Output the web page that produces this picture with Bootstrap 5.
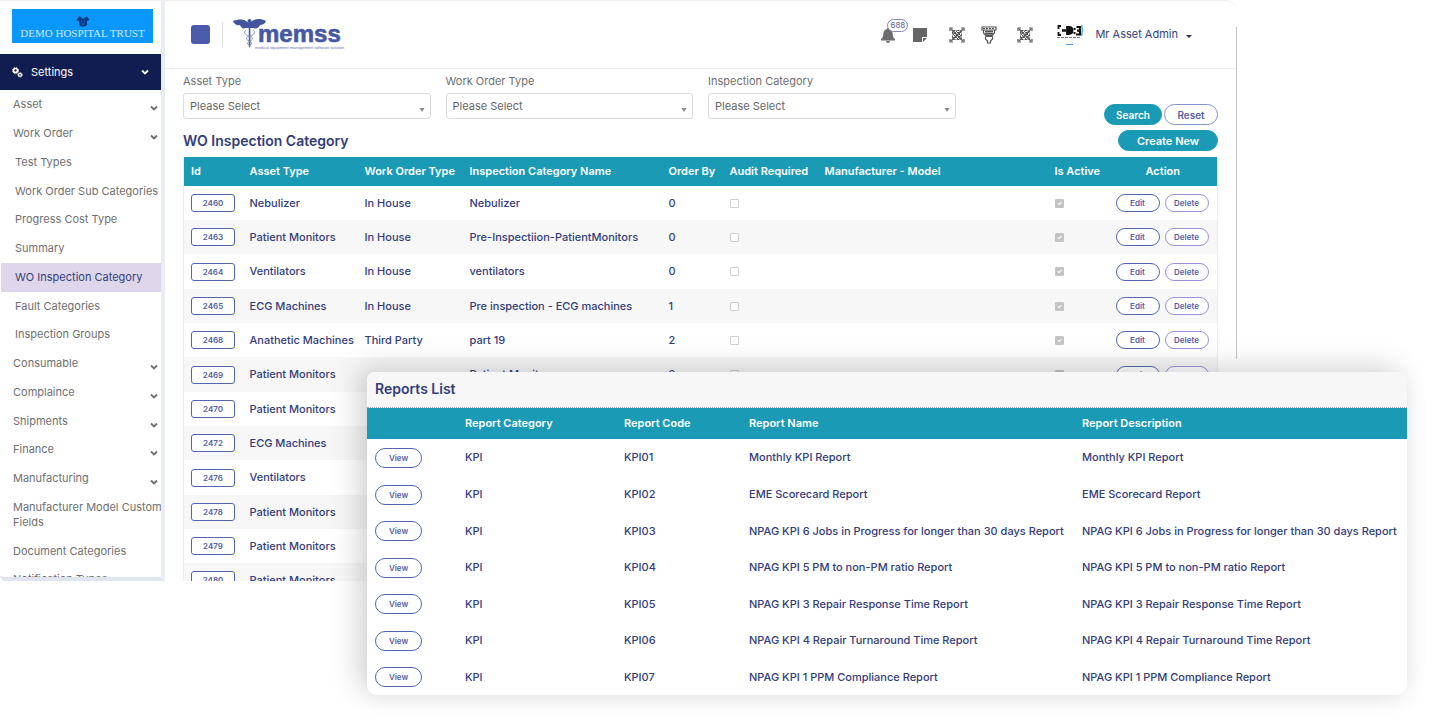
<!DOCTYPE html>
<html lang="en">
<head>
<meta charset="utf-8">
<meta name="viewport" content="width=device-width, initial-scale=1">
<title>WO Inspection Category</title>
<link href="https://cdn.jsdelivr.net/npm/bootstrap@5.3.0/dist/css/bootstrap.min.css" rel="stylesheet">
<style>
:root{--teal:#1a9ab5;--navy:#333d7a;--indigo:#4a5aa8;--ash:#6f6f6f}
body{font-family:Inter,"Open Sans",sans-serif;font-size:11px;line-height:15px;color:var(--navy);background:#fff;min-height:100vh;overflow:hidden}
.stage{min-height:100vh}
.app-window{position:relative;height:80vh;margin-right:200px;border-top:1px solid #f0f0f0;border-top-right-radius:12px;overflow:hidden}
.app-window::after{content:"";position:absolute;top:26px;bottom:222px;right:0;width:1px;background:#c4c4c8}
.side{width:165px;border-right:4px solid #eaedf6;border-bottom:4px solid #e0e4ee;border-bottom-left-radius:6px;overflow:hidden}
.trust{height:34px;margin:8px 8px 11px 12px;background:#0a97fb;color:#cdeaff;font:11px/12px "Liberation Serif",serif;padding-top:7px}
.set-head{height:36px;background:#111d50;color:#fff;padding:0 12px;border:0;font-size:11px}
.menu a{display:flex;justify-content:space-between;align-items:center;min-height:29px;padding:0 3px 0 13px;color:var(--ash);text-decoration:none;flex-shrink:0;white-space:nowrap}
.menu a:nth-child(4n){min-height:28px}
.menu a.leaf{padding-left:15px}
.menu a.current{background:#ded7ec;color:var(--navy);margin-left:1px;padding-left:14px}
.menu a.tall{min-height:44px}
.menu svg{margin-top:7px}
.topbar{height:68px;border-bottom:1px solid #eee;padding:0 45px 0 26px}
.toggle{width:19px;height:19px;border:0;border-radius:3px;background:#4b5ba9;padding:0}
.rule{width:1px;height:25px;background:#dcdce4;margin:0 10px 0 12px}
.plain{border:0;background:none;padding:0;color:inherit;display:block}
.spaced{margin-left:21px}
.count{top:-8px;left:7px;min-width:21px;height:13px;border:1px solid #8088b8;border-radius:7px;background:#fff;color:#555f98;font-size:8px;line-height:11px;text-align:center}
.main-pane{padding:5px 19px 0 18px}
.filters{--bs-gutter-x:15px}
.filters label{display:block;color:var(--ash);margin-bottom:4px}
.picker{height:26px;font-size:11px;line-height:15px;color:#666;padding:0 20px 0 6px;border:1px solid #d9dbdf;border-radius:3px;background-image:url("data:image/svg+xml,%3Csvg xmlns='http://www.w3.org/2000/svg' viewBox='0 0 6 8'%3E%3Cpath d='M.5 3h5L3 7z' fill='%23888'/%3E%3C/svg%3E");background-size:6px 8px;background-position:right 5px bottom 5px}
.form-actions{gap:2px;margin-bottom:-6px}
.pill{border-radius:12px;font-size:10px;line-height:12px;font-weight:600;height:21px;padding:0;border:1px solid var(--teal)}
.pill-fill,.pill-fill:hover{background:var(--teal);color:#fff}
.pill-line{border-color:#7f93cd;color:#5860a8}
.w-search{width:58px}.w-reset{width:54px}.w-create{width:100px;font-size:11px}
.title-row{margin:11px 0 6px}
.heading{font-size:14px;line-height:20px;font-weight:600;margin:0}
.grid{table-layout:fixed;width:100%;margin:0;color:var(--navy);font-weight:500;white-space:nowrap}
.grid th{background:var(--teal);color:#fff;font-weight:600;padding:0 7px}
.grid td{padding:0 7px}
.insp{border:1px solid #ececec;border-top:0}
.insp thead tr{height:29px}
.insp tbody tr{height:34px}
.insp tbody tr:nth-child(3n){height:35px}
.insp tbody tr:nth-child(even){background:#f7f7f7}
.btn-mini{font-size:8px;line-height:10px;font-weight:600;height:18px;padding:0;color:#5560a5;border:1px solid #5266ae;background:#fff;border-radius:9px;width:44px}
.btn-id{border-radius:3px;display:block}
.btn-del{border-color:#9a90d8;margin-left:5px}
.tick{display:block;width:9px;height:9px;margin:0;border:1px solid #cfcfcf;border-radius:2px;opacity:1!important}
.tick[type=checkbox]{border-radius:1px}
.tick:checked{background-color:#c4c4c4;border-color:#c4c4c4}
.report-card{position:absolute;left:367px;right:30px;top:372px;border-radius:8px 8px 10px 10px;background:#fff;overflow:hidden;box-shadow:-9px -5px 28px rgba(0,0,0,.17),4px 6px 22px rgba(0,0,0,.04)}
.report-title{height:36px;background:#f7f7f7;border-bottom:1px dotted #aab;padding:7px 8px}
.reports th,.reports td{padding:0 7px}
.reports th:first-child,.reports td:first-child{padding-left:8px}
.reports thead tr{height:31px}
.reports tbody tr{height:36px}
.reports tbody tr:nth-child(even),.reports tbody tr:first-child{height:37px}
.btn-view{width:47px;height:20px;border-radius:10px}
</style>
<script src="https://cdn.jsdelivr.net/npm/bootstrap@5.3.0/dist/js/bootstrap.bundle.min.js"></script>
</head>
<body>
<svg width="0" height="0" class="position-absolute" aria-hidden="true">
  <symbol id="chev" viewBox="0 0 8 6"><path d="M1 1.500l3 3 3-3" fill="none" stroke="currentColor" stroke-width="1.800"/></symbol>
  <symbol id="qr" viewBox="0 0 16 16"><g fill="none" stroke="#5a5a5a" stroke-width="1"><path d="M1 4V1h3M12 1h3v3M15 12v3h-3M4 15H1v-3" stroke-width="1.200"/><path d="M3.500 3.500h9v9h-9z" stroke-dasharray="3 1"/><path d="M2 2l12 12M14 2L2 14" stroke-width="1.400"/><path d="M4 8l4-4M6 11l5-5M8 12l4-4M7 4l5 5M4 7l5 5"/><path d="M5 4v3M11 9v3M4 10.500h3M9 5.500h3"/></g></symbol>
</svg>
<div class="stage position-relative">
  <div class="app-window d-flex">
    <aside class="side d-flex flex-column flex-shrink-0">
      <div class="trust text-center flex-shrink-0">
        <svg width="14" height="11" viewBox="0 0 14 11" class="d-block mx-auto"><path d="M3 5L.5 4 3 .5 5 1l1 1.500h2L9 1l2-.5L13.500 4 11 5v4L9 10.500H5L3 9z" fill="#083c86"/><path d="M5 5h1M8 5h1M6 8h2" stroke="#0a7bd8" stroke-width="1"/></svg>
        <span class="text-nowrap">DEMO HOSPITAL TRUST</span>
      </div>
      <button class="set-head d-flex align-items-center w-100 flex-shrink-0" type="button">
        <svg width="11" height="11" viewBox="0 0 11 11"><g fill="none" stroke="#fff"><circle cx="3.500" cy="3.500" r="2" stroke-width="1.700"/><circle cx="3.500" cy="3.500" r="3" stroke-width="1" stroke-dasharray="1.200 1.200"/><circle cx="8" cy="7.800" r="1.500" stroke-width="1.300"/><circle cx="8" cy="7.800" r="2.300" stroke-width=".8" stroke-dasharray="1 1"/></g></svg>
        <span class="ms-2 me-auto">Settings</span>
        <svg width="8" height="6"><use href="#chev"/></svg>
      </button>
      <nav class="menu d-flex flex-column" id="menu" aria-label="Settings"></nav>
    </aside>
    <main class="flex-grow-1">
      <header class="topbar d-flex align-items-center">
        <button class="toggle" type="button" aria-label="Toggle menu"></button>
        <span class="rule"></span>
        <svg width="112" height="34" viewBox="0 0 112 34" role="img" aria-label="memss">
          <g fill="#43559f"><path d="M0 3c5-2 10-2 13 0l3 2 3-2c3-2 8-3 14 0-1 3-4 4-6 4-1 3-4 4-7 3h-7c-3 1-5 0-6-3C4 8 1 6 0 3z"/><circle cx="16.500" cy="3" r="2"/><path d="M15.800 5h1.600v23l-.8 2-.8-2z"/></g>
          <path d="M13 12c-3 2-1 5 3 6s5 3 1 5-3 3 0 5M20 12c3 2 1 5-3 6s-5 3-1 5 3 3 0 5" fill="none" stroke="#7f8cc0" stroke-width="1"/>
          <text x="25" y="24" font-family="'Liberation Sans',sans-serif" font-weight="700" font-size="24" fill="#4658a4" stroke="#4658a4" stroke-width=".6">memss</text>
          <text x="22" y="31" font-family="'Liberation Sans',sans-serif" font-size="4" fill="#6271b5">medical equipment management software solution</text>
        </svg>
        <div class="d-flex align-items-center ms-auto">
          <button class="plain position-relative" type="button" aria-label="Notifications">
            <svg width="16" height="16" viewBox="0 0 16 16" class="d-block"><path d="M8 1c.8 0 1.200.5 1.200 1.200C12 3 12.800 5 12.800 8c0 2 1 3 2.200 4v1.500H1V12c1.200-1 2.200-2 2.200-4 0-3 .8-5 3.600-5.800C6.800 1.500 7.200 1 8 1zM6 14h4c0 1-1 2-2 2s-2-1-2-2z" fill="#6b6b70"/></svg>
            <span class="count position-absolute">688</span>
          </button>
          <button class="plain ms-3" type="button" aria-label="Notes"><svg width="16" height="16" viewBox="0 0 16 16" class="d-block"><path d="M1 1h14v9h-5v5H1z" fill="#666"/><path d="M11 11h4l-4 4z" fill="#666"/></svg></button>
          <button class="plain spaced" type="button" aria-label="Scan code"><svg width="16" height="16" class="d-block"><use href="#qr"/></svg></button>
          <button class="plain ms-3" type="button" aria-label="Scanner"><svg width="16" height="18" viewBox="0 0 16 18" class="d-block"><g fill="none" stroke="#555" stroke-width="1.200"><path d="M1 1h14v3H1zM2.500 4v3l3 3.500h5l3-3.500V4M4.500 10.500v2.500l2 2v2h3v-2l2-2v-2.500"/><path d="M4 5.500h8M4 7.500h8M5 9.200h6" stroke-width="1.400"/><path d="M2 2.500h12" stroke-dasharray="2 1"/></g></svg></button>
          <button class="plain ms-3" type="button" aria-label="Scan asset"><svg width="16" height="16" class="d-block ms-1"><use href="#qr"/></svg></button>
          <button class="plain ms-4 d-flex align-items-center" type="button">
            <svg width="26" height="22" viewBox="0 0 26 22"><g fill="none" stroke="#111" stroke-width="1.800"><path d="M4 2H1.500v3M1.500 8v3H4"/><path d="M5 6.500h4" stroke-width="2.500"/><path d="M10 3h2q3.500 0 3.500 3.500T12 10h-2z" fill="#111"/><path d="M17.500 4v2M17.500 8v2" stroke-width="2"/><path d="M19.500 3H23v7.500h-4M20 6.700h3" stroke-width="2.200"/></g><path d="M24.500 1q1.500 5 0 11" stroke="#2ab0e8" fill="none" stroke-width="1.300"/><path d="M0 13.500h24" stroke="#777" stroke-dasharray="3 1"/><path d="M9 20.500h7" stroke="#4a9be0"/></svg>
            <span class="ms-2 ps-1">Mr Asset Admin</span>
            <svg width="6" height="5" viewBox="0 0 6 5" class="ms-2 mt-1"><path d="M0 1h6L3 4z" fill="#2b2f50"/></svg>
          </button>
        </div>
      </header>
      <section class="main-pane">
        <form class="row filters">
          <div class="col-3"><label for="asset">Asset Type</label><select id="asset" class="form-select picker"><option>Please Select</option></select></div>
          <div class="col-3"><label for="order">Work Order Type</label><select id="order" class="form-select picker"><option>Please Select</option></select></div>
          <div class="col-3"><label for="insp">Inspection Category</label><select id="insp" class="form-select picker"><option>Please Select</option></select></div>
          <div class="col-3 d-flex justify-content-end align-items-end">
            <div class="form-actions d-flex"><button type="button" class="btn pill pill-fill w-search">Search</button><button type="reset" class="btn pill pill-line w-reset">Reset</button></div>
          </div>
        </form>
        <div class="title-row d-flex justify-content-between align-items-center">
          <h1 class="heading">WO Inspection Category</h1>
          <button type="button" class="btn pill pill-fill w-create">Create New</button>
        </div>
        <table class="grid insp">
          <colgroup><col style="width:59px"><col style="width:115px"><col style="width:105px"><col style="width:199px"><col style="width:61px"><col style="width:95px"><col><col style="width:61px"><col style="width:109px"></colgroup>
          <thead><tr><th>Id</th><th>Asset Type</th><th>Work Order Type</th><th>Inspection Category Name</th><th>Order By</th><th>Audit Required</th><th>Manufacturer - Model</th><th>Is Active</th><th class="text-center">Action</th></tr></thead>
          <tbody id="inspRows"></tbody>
        </table>
      </section>
    </main>
  </div>
  <section class="report-card">
    <div class="report-title"><h2 class="heading">Reports List</h2></div>
    <table class="grid reports">
      <colgroup><col style="width:91px"><col style="width:159px"><col style="width:125px"><col style="width:333px"><col></colgroup>
      <thead><tr><th></th><th>Report Category</th><th>Report Code</th><th>Report Name</th><th>Report Description</th></tr></thead>
      <tbody id="reportRows"></tbody>
    </table>
  </section>
</div>
<script>
const menu = [["Asset",1],["Work Order",1],["Test Types"],["Work Order Sub Categories"],["Progress Cost Type"],["Summary"],["WO Inspection Category",0,"current"],["Fault Categories"],["Inspection Groups"],["Consumable",1],["Complaince",1],["Shipments",1],["Finance",1],["Manufacturing",1],["Manufacturer Model Custom<br>Fields",2,"tall"],["Document Categories",2],["Notification Types",2]];
document.getElementById("menu").innerHTML = menu.map(([t,k,c]) =>
  `<a href="#" class="${k?"":"leaf"} ${c||""}"><span>${t}</span>${k===1?'<svg width="8" height="6"><use href="#chev"/></svg>':""}</a>`).join("");
const rows = [[2460,"Nebulizer","In House","Nebulizer",0],[2463,"Patient Monitors","In House","Pre-Inspectiion-PatientMonitors",0],[2464,"Ventilators","In House","ventilators",0],[2465,"ECG Machines","In House","Pre inspection - ECG machines",1],[2468,"Anathetic Machines","Third Party","part 19",2],[2469,"Patient Monitors","","Patient Monitors",2],[2470,"Patient Monitors","","",""],[2472,"ECG Machines","","",""],[2476,"Ventilators","","",""],[2478,"Patient Monitors","","",""],[2479,"Patient Monitors","","",""],[2480,"Patient Monitors","","",""]];
document.getElementById("inspRows").innerHTML = rows.map(([id,a,w,n,o]) =>
  `<tr><td><button type="button" class="btn btn-mini btn-id">${id}</button></td><td>${a}</td><td>${w}</td><td>${n}</td><td>${o}</td>
   <td><input type="checkbox" class="form-check-input tick" disabled aria-label="Audit required ${id}"></td><td></td>
   <td><input type="checkbox" class="form-check-input tick" checked disabled aria-label="Active ${id}"></td>
   <td><button type="button" class="btn btn-mini">Edit</button><button type="button" class="btn btn-mini btn-del">Delete</button></td></tr>`).join("");
const reports = ["Monthly KPI Report","EME Scorecard Report","NPAG KPI 6 Jobs in Progress for longer than 30 days Report","NPAG KPI 5 PM to non-PM ratio Report","NPAG KPI 3 Repair Response Time Report","NPAG KPI 4 Repair Turnaround Time Report","NPAG KPI 1 PPM Compliance Report"];
document.getElementById("reportRows").innerHTML = reports.map((r,i) =>
  `<tr><td><button type="button" class="btn btn-mini btn-view">View</button></td><td>KPI</td><td>KPI0${i+1}</td><td>${r}</td><td>${r}</td></tr>`).join("");
</script>
</body>
</html>
